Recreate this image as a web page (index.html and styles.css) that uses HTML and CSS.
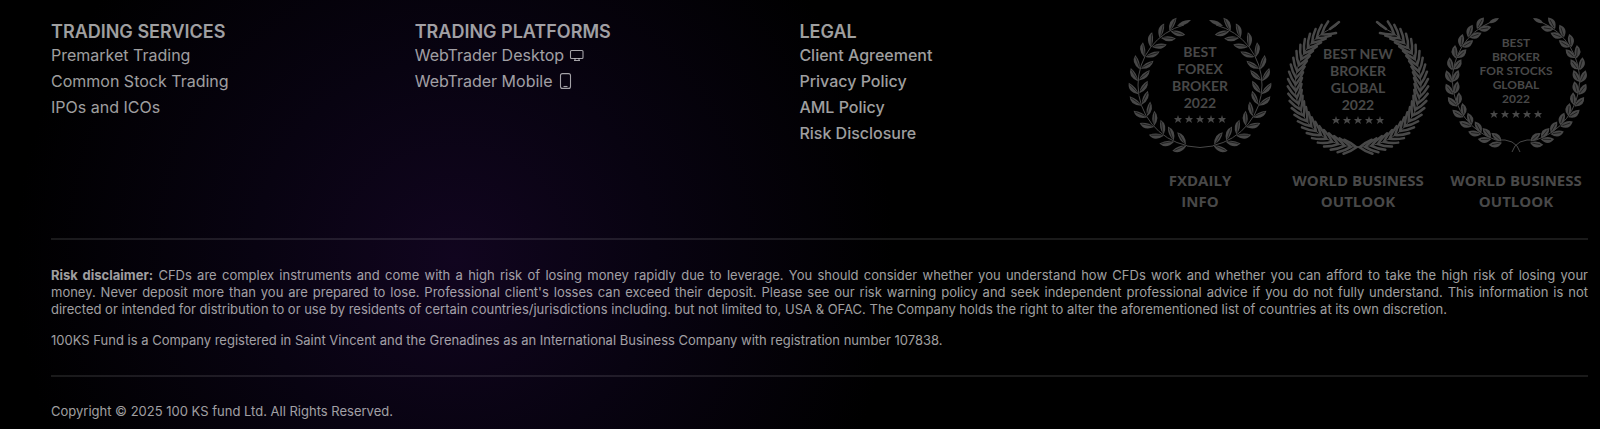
FILE: index.html
```html
<!DOCTYPE html>
<html lang="en">
<head>
<meta charset="utf-8">
<title>100KS Fund</title>
<link rel="stylesheet" href="styles.css">
</head>
<body>
<svg class="defs" aria-hidden="true">
  <defs>
    <!-- each pair sits at nine o'clock on a ring centred on 0,0 and grows upward -->
    <g id="pair-a">
      <path d="M-62 6Q-63-1-71-6Q-73 3-62 6ZM-61 5Q-60-3-52-7Q-51 2-61 5Z"/>
      <path class="vein" d="M-63 4L-70-4M-60 3L-53-5"/>
    </g>
    <g id="half-a">
      <path class="stem" d="M-16-60A62 62 0 0 0-62 0A62 62 0 0 0-13 60.6"/>
      <path d="M-23-59Q-18-66-9-65Q-14-59-23-59Z"/>
      <use href="#pair-a" transform="rotate(66)"/>
      <use href="#pair-a" transform="rotate(55)"/>
      <use href="#pair-a" transform="rotate(43)"/>
      <use href="#pair-a" transform="rotate(32)"/>
      <use href="#pair-a" transform="rotate(20)"/>
      <use href="#pair-a" transform="rotate(9)"/>
      <use href="#pair-a" transform="rotate(-3)"/>
      <use href="#pair-a" transform="rotate(-14)"/>
      <use href="#pair-a" transform="rotate(-26)"/>
      <use href="#pair-a" transform="rotate(-37)"/>
      <use href="#pair-a" transform="rotate(-49)"/>
      <use href="#pair-a" transform="rotate(-60)"/>
      <use href="#pair-a" transform="rotate(-72)"/>
    </g>
    <path id="pair-b" class="needle" d="M-70-6Q-67 1-62 6Q-58 0-56-7"/>
    <g id="half-b">
      <path class="stem" d="M-18-63Q-22-58-28-56A63 63 0 0 0-63 0A63 62 0 0 0 2 62"/>
      <path class="needle" d="M-28-56L-19-63"/>
      <use href="#pair-b" transform="rotate(60)"/>
      <use href="#pair-b" transform="rotate(54)"/>
      <use href="#pair-b" transform="rotate(48)"/>
      <use href="#pair-b" transform="rotate(42)"/>
      <use href="#pair-b" transform="rotate(36)"/>
      <use href="#pair-b" transform="rotate(30)"/>
      <use href="#pair-b" transform="rotate(24)"/>
      <use href="#pair-b" transform="rotate(18)"/>
      <use href="#pair-b" transform="rotate(12)"/>
      <use href="#pair-b" transform="rotate(6)"/>
      <use href="#pair-b"/>
      <use href="#pair-b" transform="rotate(-6)"/>
      <use href="#pair-b" transform="rotate(-12)"/>
      <use href="#pair-b" transform="rotate(-18)"/>
      <use href="#pair-b" transform="rotate(-24)"/>
      <use href="#pair-b" transform="rotate(-30)"/>
      <use href="#pair-b" transform="rotate(-36)"/>
      <use href="#pair-b" transform="rotate(-42)"/>
      <use href="#pair-b" transform="rotate(-48)"/>
      <use href="#pair-b" transform="rotate(-54)"/>
      <use href="#pair-b" transform="rotate(-60)"/>
      <use href="#pair-b" transform="rotate(-66)"/>
      <use href="#pair-b" transform="rotate(-72)"/>
      <use href="#pair-b" transform="rotate(-78)"/>
      <use href="#pair-b" transform="rotate(-83)"/>
    </g>
    <g id="pair-c">
      <path d="M-64 6Q-63-2-70-6Q-74 3-64 6ZM-63 5Q-65-3-58-7Q-54 2-63 5Z"/>
      <path class="vein" d="M-65 4L-69-3M-62 3L-59-4"/>
    </g>
    <g id="half-c">
      <path class="stem" d="M-25-58A63 63 0 0 0-20 60Q0 58 4 72"/>
      <path d="M-27-57Q-25-62-17-62Q-20-56-27-57Z"/>
      <use href="#pair-c" transform="rotate(58)"/>
      <use href="#pair-c" transform="rotate(47)"/>
      <use href="#pair-c" transform="rotate(36)"/>
      <use href="#pair-c" transform="rotate(25)"/>
      <use href="#pair-c" transform="rotate(14)"/>
      <use href="#pair-c" transform="rotate(3)"/>
      <use href="#pair-c" transform="rotate(-8)"/>
      <use href="#pair-c" transform="rotate(-19)"/>
      <use href="#pair-c" transform="rotate(-30)"/>
      <use href="#pair-c" transform="rotate(-41)"/>
      <use href="#pair-c" transform="rotate(-52)"/>
      <use href="#pair-c" transform="rotate(-62)"/>
      <use href="#pair-c" transform="rotate(-72)"/>
    </g>
    <path id="star" d="M0-4L1-1H4L2 1L3 4L0 2L-3 4L-2 1L-4-1H-1Z"/>
    <g id="stars">
      <use href="#star" x="-22"/><use href="#star" x="-11"/><use href="#star"/><use href="#star" x="11"/><use href="#star" x="22"/>
    </g>
  </defs>
</svg>

<footer class="footer">
  <div class="footer-top">
    <nav class="column" aria-labelledby="services">
      <h2 class="column-title" id="services">TRADING SERVICES</h2>
      <a class="link" href="#">Premarket Trading</a>
      <a class="link" href="#">Common Stock Trading</a>
      <a class="link" href="#">IPOs and ICOs</a>
    </nav>
    <nav class="column" aria-labelledby="platforms">
      <h2 class="column-title" id="platforms">TRADING PLATFORMS</h2>
      <a class="link" href="#">WebTrader Desktop
        <svg class="icon" viewBox="0 0 16 16" aria-hidden="true"><rect x="1.5" y="3.5" width="12.5" height="8" rx="1"/><path d="M6 11.5V13M10 11.5V13M5 13.5H11"/></svg>
      </a>
      <a class="link" href="#">WebTrader Mobile
        <svg class="icon" viewBox="0 0 16 16" aria-hidden="true"><rect x="2.5" y=".6" width="10" height="14.8" rx="2"/><path d="M5.5 13.5H9.5"/></svg>
      </a>
    </nav>
    <nav class="column column-strong" aria-labelledby="legal">
      <h2 class="column-title" id="legal">LEGAL</h2>
      <a class="link" href="#">Client Agreement</a>
      <a class="link" href="#">Privacy Policy</a>
      <a class="link" href="#">AML Policy</a>
      <a class="link" href="#">Risk Disclosure</a>
    </nav>
    <div class="awards">
      <figure class="award">
        <svg class="wreath" viewBox="0 0 144 140">
          <g transform="translate(72 70)"><use href="#half-a"/><use href="#half-a" transform="scale(-1 1)"/><path class="stem" d="M-13 61Q0 64 13 61"/></g>
          <text x="72" y="42">BEST</text><text x="72" y="59">FOREX</text><text x="72" y="76">BROKER</text><text x="72" y="93">2022</text>
          <use href="#stars" x="72" y="104"/>
        </svg>
        <figcaption class="caption">FXDAILY<br>INFO</figcaption>
      </figure>
      <figure class="award">
        <svg class="wreath" viewBox="0 0 144 140">
          <g transform="translate(72 70)"><use href="#half-b"/><use href="#half-b" transform="scale(-1 1)"/></g>
          <text x="72" y="44">BEST NEW</text><text x="72" y="61">BROKER</text><text x="72" y="78">GLOBAL</text><text x="72" y="95">2022</text>
          <use href="#stars" x="72" y="105"/>
        </svg>
        <figcaption class="caption">WORLD BUSINESS<br>OUTLOOK</figcaption>
      </figure>
      <figure class="award">
        <svg class="wreath wreath-small" viewBox="0 0 144 140">
          <g transform="translate(72 65)"><use href="#half-c"/><use href="#half-c" transform="scale(-1 1)"/></g>
          <text x="72" y="32">BEST</text><text x="72" y="46">BROKER</text><text x="72" y="60">FOR STOCKS</text><text x="72" y="74">GLOBAL</text><text x="72" y="88">2022</text>
          <use href="#stars" x="72" y="99"/>
        </svg>
        <figcaption class="caption">WORLD BUSINESS<br>OUTLOOK</figcaption>
      </figure>
    </div>
  </div>
  <section class="legal-text">
    <p><strong>Risk disclaimer:</strong> CFDs are complex instruments and come with a high risk of losing money rapidly due to leverage. You should consider whether you understand how CFDs work and whether you can afford to take the high risk of losing your money.&nbsp;Never deposit more than you are prepared to lose. Professional client's losses can exceed their deposit. Please see our risk warning policy and seek independent professional advice if you do not fully understand. This information is not directed&nbsp;or&nbsp;intended for distribution to or use by residents of certain countries/jurisdictions including. but not limited to, USA &amp; OFAC. The Company holds the right to alter the aforementioned list of countries at its own discretion.</p>
    <p>100KS Fund is a Company registered in Saint Vincent and the Grenadines as an International Business Company with registration number 107838.</p>
  </section>
  <p class="copyright">Copyright © 2025 100 KS fund Ltd. All Rights Reserved.</p>
</footer>
</body>
</html>
```
FILE: styles.css
```css
body {
  margin: 0;
  background: #000;
}

.defs {
  display: block;
  width: 0;
  height: 0;
}

.footer {
  box-sizing: border-box;
  min-height: 100vh;
  padding: 15px 12px 8px 51px;
  background: radial-gradient(circle at 455px 260px, #11051f 0, #080311 200px, #000 440px) #000;
  color: rgba(255, 255, 255, 0.63);
  font: 13px/17px Inter, "Liberation Sans", sans-serif;
}

.footer-top {
  display: grid;
  grid-template-columns: 363fr 384fr 328fr auto;
  padding-bottom: 26px;
}

.column {
  display: flex;
  flex-direction: column;
  align-items: flex-start;
  padding-top: 6px;
}

.column-title {
  margin: 0;
  font-size: 18px;
  font-weight: 600;
  line-height: 21px;
}

.link {
  display: flex;
  align-items: center;
  gap: 5px;
  color: inherit;
  font-size: 16px;
  line-height: 26px;
  text-decoration: none;
}

.column-strong .link {
  font-weight: 500;
}

.icon {
  width: 16px;
  height: 16px;
  fill: none;
  stroke: currentColor;
  stroke-width: 1.1;
}

.awards {
  display: flex;
  gap: 14px;
}

.award {
  display: flex;
  flex-direction: column;
  gap: 15px;
  width: 144px;
  margin: 0;
}

.wreath {
  width: 100%;
  overflow: visible;
  fill: #484848;
  font: 700 14px Lato, sans-serif;
  text-anchor: middle;
}

.wreath-small {
  font-size: 12px;
}

.stem,
.needle {
  fill: none;
  stroke: #484848;
  stroke-width: 1;
}

.needle {
  stroke-width: 2.5;
  stroke-linecap: round;
}

.vein {
  fill: none;
  stroke: #000;
  stroke-width: 0.5;
}

.caption {
  color: #484848;
  font: 700 15px/21px "Open Sans", sans-serif;
  text-align: center;
  white-space: nowrap;
}

.legal-text {
  display: flex;
  flex-direction: column;
  gap: 14px;
  padding: 27px 0 26px;
  border: solid rgba(255, 255, 255, 0.1);
  border-width: 2px 0;
  text-align: justify;
}

.legal-text p {
  margin: 0;
}

.copyright {
  margin: 26px 0 0;
}
```
